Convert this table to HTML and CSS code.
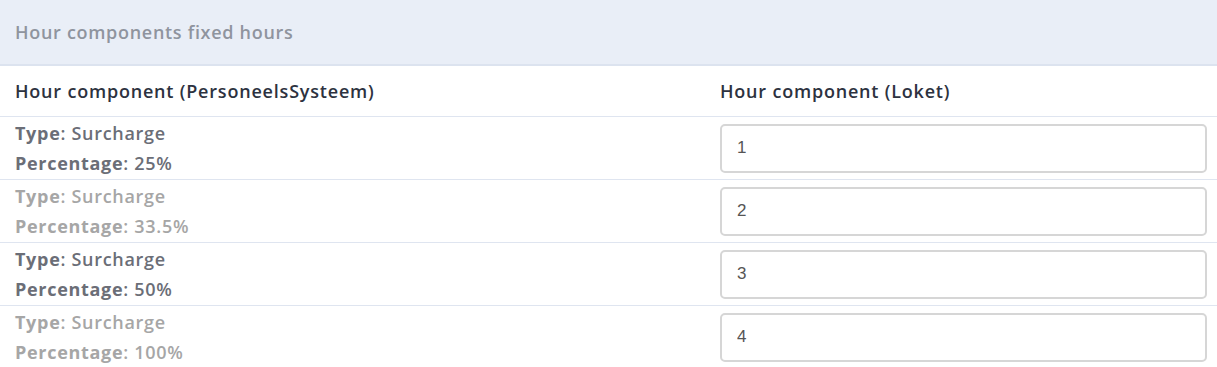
FILE: index.html
```html
<!DOCTYPE html>
<html lang="en">
<head>
    <meta charset="UTF-8">
    <meta name="viewport" content="width=device-width, initial-scale=1.0">
    <title>Hour components fixed hours</title>
    <link rel="stylesheet" href="styles.css">
</head>
<body>

    <div class="panel">
        <div class="panel-heading">Hour components fixed hours</div>

        <table class="mapping-table">
            <thead>
                <tr>
                    <th class="col-source">Hour component (PersoneelsSysteem)</th>
                    <th class="col-target">Hour component (Loket)</th>
                </tr>
            </thead>
            <tbody>
                <tr>
                    <td>
                        <div class="line"><b>Type</b>: Surcharge</div>
                        <div class="line"><b>Percentage</b>: 25%</div>
                    </td>
                    <td><input type="text" class="field" value="1"></td>
                </tr>
                <tr class="muted">
                    <td>
                        <div class="line"><b>Type</b>: Surcharge</div>
                        <div class="line"><b>Percentage</b>: 33.5%</div>
                    </td>
                    <td><input type="text" class="field" value="2"></td>
                </tr>
                <tr>
                    <td>
                        <div class="line"><b>Type</b>: Surcharge</div>
                        <div class="line"><b>Percentage</b>: 50%</div>
                    </td>
                    <td><input type="text" class="field" value="3"></td>
                </tr>
                <tr class="muted">
                    <td>
                        <div class="line"><b>Type</b>: Surcharge</div>
                        <div class="line"><b>Percentage</b>: 100%</div>
                    </td>
                    <td><input type="text" class="field" value="4"></td>
                </tr>
            </tbody>
        </table>
    </div>

</body>
</html>
```

FILE: styles.css
```css
/* General styling */
body {
    font-family: "Open Sans", Lato, sans-serif;
    margin: 0;
    background-color: #fff;
    color: #2f3441;
}

.panel {
    width: 1217px;
}

.panel-heading {
    height: 64px;
    padding: 0 15px;
    display: flex;
    align-items: center;
    background-color: #e9eef7;
    border-bottom: 2px solid #dce3ef;
    color: #8f949e;
    font-size: 18px;
    font-weight: 600;
    letter-spacing: 0.7px;
}

/* Mapping table */
.mapping-table {
    width: 100%;
    border-collapse: collapse;
}

.mapping-table th {
    height: 50px;
    padding: 0 15px;
    text-align: left;
    font-size: 18px;
    font-weight: 600;
    letter-spacing: 0.8px;
    color: #2d3240;
    border-bottom: 1px solid #dfe5f0;
}

.col-source {
    width: 675px;
}

.mapping-table td {
    padding: 0 10px 0 15px;
    height: 62px;
    vertical-align: middle;
    border-bottom: 1px solid #dfe5f0;
    color: #6b6e77;
    font-size: 18px;
    font-weight: 600;
    letter-spacing: 0.7px;
}

.mapping-table tbody tr:last-child td {
    border-bottom: none;
}

.mapping-table b {
    font-weight: 700;
}

.line {
    line-height: 30px;
}

.muted td {
    color: #a6a6a6;
}

.field {
    box-sizing: border-box;
    display: block;
    width: 100%;
    height: 49px;
    padding: 0 15px;
    font-family: "Liberation Sans", Arial, sans-serif;
    font-size: 17px;
    letter-spacing: 0;
    color: #555;
    border: 2px solid #d6d6d6;
    border-radius: 5px;
    background-color: #fff;
}
```
